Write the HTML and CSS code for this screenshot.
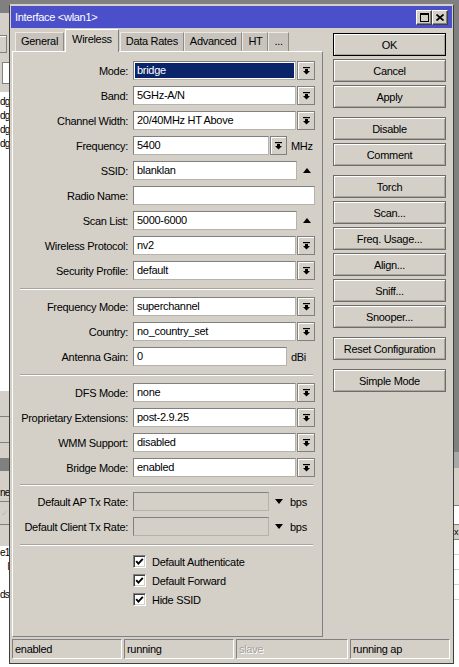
FILE: index.html
```html
<!DOCTYPE html>
<html lang="en">
<head>
    <meta charset="UTF-8">
    <meta name="viewport" content="width=device-width, initial-scale=1.0">
    <title>Interface &lt;wlan1&gt;</title>
    <link rel="stylesheet" href="styles.css">
</head>
<body>
    <svg class="defs" width="0" height="0">
        <symbol id="dd" viewBox="0 0 7 8">
            <rect x="0" y="0" width="7" height="1.2"/>
            <rect x="2" y="2" width="3" height="2"/>
            <polygon points="0,4 7,4 3.5,7.6"/>
        </symbol>
    </svg>

    <!-- windows behind the dialog -->
    <div class="bg-win bg-left">
        <div class="bg-tool"><span class="bg-btn"></span></div>
        <div class="bg-field"></div>
        <div class="bg-list">
            <div class="bg-row">dg</div>
            <div class="bg-row">dg</div>
            <div class="bg-row">dg</div>
            <div class="bg-row">dg</div>
        </div>
        <div class="bg-bar"></div>
        <div class="bg-bar"></div>
    </div>
    <div class="bg-win bg-left2">
        <div class="bg-cap"></div>
        <div class="bg-head">ne</div>
        <div class="bg-tool2">✓</div>
        <div class="bg-list2">
            <div class="bg-row">e1</div>
            <div class="bg-row">l</div>
            <div class="bg-row"></div>
            <div class="bg-row">ds</div>
        </div>
    </div>
    <div class="bg-win bg-right">
        <div class="bg-cap"></div>
        <div class="bg-field2"></div>
        <div class="bg-head2">x</div>
        <div class="bg-lines">
            <div class="bg-line"></div>
            <div class="bg-line"></div>
            <div class="bg-line"></div>
            <div class="bg-line"></div>
        </div>
    </div>
    <div class="bg-win bg-bottom"></div>

    <div class="window">
        <div class="titlebar">
            <span class="title">Interface &lt;wlan1&gt;</span>
            <div class="title-buttons">
                <span class="tbtn">
                    <svg width="9" height="9" viewBox="0 0 9 9"><rect x="0.5" y="0.5" width="8" height="8" fill="none" stroke="#000"/><rect x="0" y="0" width="9" height="2"/></svg>
                </span>
                <span class="tbtn">
                    <svg width="8" height="7" viewBox="0 0 8 7"><path d="M0.5 0.5 L7.5 6.5 M7.5 0.5 L0.5 6.5" stroke="#000" stroke-width="1.7"/></svg>
                </span>
            </div>
        </div>

        <div class="body">
            <div class="main">
                <div class="left">
                    <div class="tabs">
                        <span class="tab">General</span>
                        <span class="tab active">Wireless</span>
                        <span class="tab">Data Rates</span>
                        <span class="tab">Advanced</span>
                        <span class="tab">HT</span>
                        <span class="tab">...</span>
                    </div>
                    <div class="panel">
                        <div class="row">
                            <label>Mode:</label>
                            <div class="combo">
                                <span class="field selected">bridge</span>
                                <span class="drop"><svg><use href="#dd"/></svg></span>
                            </div>
                        </div>
                        <div class="row">
                            <label>Band:</label>
                            <div class="combo">
                                <span class="field">5GHz-A/N</span>
                                <span class="drop"><svg><use href="#dd"/></svg></span>
                            </div>
                        </div>
                        <div class="row">
                            <label>Channel Width:</label>
                            <div class="combo">
                                <span class="field">20/40MHz HT Above</span>
                                <span class="drop"><svg><use href="#dd"/></svg></span>
                            </div>
                        </div>
                        <div class="row">
                            <label>Frequency:</label>
                            <div class="combo short">
                                <span class="field">5400</span>
                                <span class="drop narrow"><svg><use href="#dd"/></svg></span>
                            </div>
                            <span class="unit">MHz</span>
                        </div>
                        <div class="row">
                            <label>SSID:</label>
                            <span class="field list">blanklan</span>
                            <span class="tri up"></span>
                        </div>
                        <div class="row">
                            <label>Radio Name:</label>
                            <span class="field wide"></span>
                        </div>
                        <div class="row">
                            <label>Scan List:</label>
                            <span class="field list">5000-6000</span>
                            <span class="tri up"></span>
                        </div>
                        <div class="row">
                            <label>Wireless Protocol:</label>
                            <div class="combo">
                                <span class="field">nv2</span>
                                <span class="drop"><svg><use href="#dd"/></svg></span>
                            </div>
                        </div>
                        <div class="row">
                            <label>Security Profile:</label>
                            <div class="combo">
                                <span class="field">default</span>
                                <span class="drop"><svg><use href="#dd"/></svg></span>
                            </div>
                        </div>

                        <div class="sep"></div>

                        <div class="row">
                            <label>Frequency Mode:</label>
                            <div class="combo">
                                <span class="field">superchannel</span>
                                <span class="drop"><svg><use href="#dd"/></svg></span>
                            </div>
                        </div>
                        <div class="row">
                            <label>Country:</label>
                            <div class="combo">
                                <span class="field">no_country_set</span>
                                <span class="drop"><svg><use href="#dd"/></svg></span>
                            </div>
                        </div>
                        <div class="row">
                            <label>Antenna Gain:</label>
                            <span class="field mid">0</span>
                            <span class="unit">dBi</span>
                        </div>

                        <div class="sep"></div>

                        <div class="row">
                            <label>DFS Mode:</label>
                            <div class="combo">
                                <span class="field">none</span>
                                <span class="drop"><svg><use href="#dd"/></svg></span>
                            </div>
                        </div>
                        <div class="row">
                            <label>Proprietary Extensions:</label>
                            <div class="combo">
                                <span class="field">post-2.9.25</span>
                                <span class="drop"><svg><use href="#dd"/></svg></span>
                            </div>
                        </div>
                        <div class="row">
                            <label>WMM Support:</label>
                            <div class="combo">
                                <span class="field">disabled</span>
                                <span class="drop"><svg><use href="#dd"/></svg></span>
                            </div>
                        </div>
                        <div class="row">
                            <label>Bridge Mode:</label>
                            <div class="combo">
                                <span class="field">enabled</span>
                                <span class="drop"><svg><use href="#dd"/></svg></span>
                            </div>
                        </div>

                        <div class="sep tight"></div>

                        <div class="row">
                            <label>Default AP Tx Rate:</label>
                            <span class="field short off"></span>
                            <span class="tri down"></span>
                            <span class="unit bps">bps</span>
                        </div>
                        <div class="row">
                            <label>Default Client Tx Rate:</label>
                            <span class="field short off"></span>
                            <span class="tri down"></span>
                            <span class="unit bps">bps</span>
                        </div>

                        <div class="sep loose"></div>

                        <div class="check-row">
                            <span class="checkbox"><svg width="9" height="9" viewBox="0 0 9 9"><polyline points="1.2,4.2 3.4,6.6 7.8,1.8" fill="none" stroke="#000" stroke-width="1.9"/></svg></span>
                            <span>Default Authenticate</span>
                        </div>
                        <div class="check-row">
                            <span class="checkbox"><svg width="9" height="9" viewBox="0 0 9 9"><polyline points="1.2,4.2 3.4,6.6 7.8,1.8" fill="none" stroke="#000" stroke-width="1.9"/></svg></span>
                            <span>Default Forward</span>
                        </div>
                        <div class="check-row">
                            <span class="checkbox"><svg width="9" height="9" viewBox="0 0 9 9"><polyline points="1.2,4.2 3.4,6.6 7.8,1.8" fill="none" stroke="#000" stroke-width="1.9"/></svg></span>
                            <span>Hide SSID</span>
                        </div>
                    </div>
                </div>

                <div class="buttons">
                    <button class="btn default">OK</button>
                    <button class="btn">Cancel</button>
                    <button class="btn">Apply</button>
                    <button class="btn group">Disable</button>
                    <button class="btn">Comment</button>
                    <button class="btn group">Torch</button>
                    <button class="btn">Scan...</button>
                    <button class="btn">Freq. Usage...</button>
                    <button class="btn">Align...</button>
                    <button class="btn">Sniff...</button>
                    <button class="btn">Snooper...</button>
                    <button class="btn group">Reset Configuration</button>
                    <button class="btn group">Simple Mode</button>
                </div>
            </div>

            <div class="status">
                <span class="cell c1">enabled</span>
                <span class="cell c2">running</span>
                <span class="cell c3 dim">slave</span>
                <span class="cell c4">running ap</span>
            </div>
        </div>
    </div>
</body>
</html>
```

FILE: styles.css
```css
* {
    box-sizing: border-box;
}
body {
    margin: 0;
    width: 459px;
    height: 667px;
    overflow: hidden;
    position: relative;
    background: #808080;
    font-family: "Liberation Sans", Arial, sans-serif;
    font-size: 11px;
    letter-spacing: -0.3px;
    color: #000;
}
.defs {
    position: absolute;
}

/* desktop windows behind */
.bg-win {
    position: absolute;
    background: #d4d0c8;
    overflow: hidden;
}
.bg-left {
    left: 0;
    top: 13px;
    width: 9px;
    height: 445px;
}
.bg-tool {
    height: 49px;
    padding-top: 22px;
}
.bg-btn {
    display: block;
    width: 7px;
    height: 18px;
    border: 1px solid #808080;
    border-left: none;
    box-shadow: inset 0 1px 0 #fff;
}
.bg-field {
    height: 22px;
    margin-left: 2px;
    background: #fff;
    border: 1px solid #808080;
    border-right: none;
}
.bg-list {
    margin-top: 8px;
    height: 299px;
    background: #fff;
    padding-top: 3px;
}
.bg-row {
    height: 14px;
    line-height: 14px;
    text-align: right;
    white-space: nowrap;
    font-size: 10px;
    letter-spacing: -0.8px;
}
.bg-bar {
    height: 26px;
    border-bottom: 1px solid #808080;
}
.bg-left2 {
    left: 0;
    top: 458px;
    width: 9px;
    height: 209px;
}
.bg-cap {
    height: 13px;
    background: #808080;
}
.bg-head {
    margin-top: 13px;
    height: 18px;
    line-height: 18px;
    text-align: right;
    font-size: 10px;
    letter-spacing: -0.8px;
    border-bottom: 1px solid #808080;
}
.bg-tool2 {
    height: 23px;
    line-height: 23px;
    font-size: 9px;
    color: #bdbab3;
    text-align: right;
    border-bottom: 1px solid #808080;
}
.bg-list2 {
    margin-top: 21px;
    background: #fff;
    height: 140px;
}
.bg-right {
    left: 453px;
    top: 452px;
    width: 6px;
    height: 215px;
}
.bg-right .bg-cap {
    height: 16px;
    background: #a8a8a8;
}
.bg-field2 {
    margin-top: 37px;
    height: 20px;
    background: #fff;
    border: 1px solid #808080;
    border-right: none;
}
.bg-head2 {
    height: 15px;
    line-height: 15px;
    padding-left: 1px;
    font-size: 9px;
    border-bottom: 1px solid #808080;
}
.bg-lines {
    background: #fff;
    height: 140px;
}
.bg-line {
    height: 15px;
    border-bottom: 1px solid #d0d0d0;
}
.bg-bottom {
    left: 0;
    top: 664px;
    width: 459px;
    height: 3px;
    background: #fff;
}

/* dialog */
.window {
    position: absolute;
    left: 9px;
    top: 4px;
    width: 445px;
    height: 660px;
    padding: 1px;
    background: #d4d0c8;
    border: 1px solid #404040;
    border-top-color: #d4d0c8;
}
.titlebar {
    height: 22px;
    background: #4b4fc9;
    color: #fff;
    display: flex;
    align-items: center;
    justify-content: space-between;
    padding: 0 4px;
}
.title-buttons {
    display: flex;
}
.tbtn {
    width: 16px;
    height: 15px;
    background: #d4d0c8;
    border: 1px solid #404040;
    border-top-color: #fff;
    border-left-color: #fff;
    box-shadow: inset -1px -1px 0 #808080;
    display: flex;
    align-items: center;
    justify-content: center;
}
.body {
    padding: 1px 0 0 1px;
}
.main {
    display: flex;
    height: 608px;
}
.left {
    width: 311px;
    display: flex;
    flex-direction: column;
}
.tabs {
    height: 22px;
    display: flex;
    align-items: flex-end;
    padding-left: 3px;
}
.tab {
    height: 19px;
    line-height: 17px;
    padding: 0 5px;
    background: #c8c4bd;
    border: 1px solid #ece9e3;
    border-bottom: none;
    border-right-color: #8e8b85;
    white-space: nowrap;
}
.tab.active {
    height: 23px;
    margin: 0 1px -1px 1px;
    padding: 0 6px;
    line-height: 18px;
    background: #d4d0c8;
    border-color: #fff;
    border-right-color: #808080;
    position: relative;
    z-index: 1;
}
.panel {
    flex: 1;
    display: flex;
    flex-direction: column;
    border: 1px solid #808080;
    border-top-color: #fff;
    border-left-color: #fff;
    padding-top: 9px;
}
.row {
    display: flex;
    align-items: center;
    flex: none;
    height: 19px;
    margin-bottom: 6px;
}
.row label {
    flex: none;
    width: 115px;
    margin-right: 5px;
    text-align: right;
    white-space: nowrap;
}
.combo {
    display: flex;
    width: 182px;
    height: 19px;
}
.combo.short {
    width: 154px;
}
.field {
    display: block;
    height: 19px;
    line-height: 17px;
    padding-left: 3px;
    background: #fff;
    border: 1px solid #808080;
    border-right-color: #b6b3ac;
    border-bottom-color: #b6b3ac;
    white-space: nowrap;
    overflow: hidden;
}
.combo .field {
    flex: 1;
}
.field.selected {
    background: #0a246a;
    color: #fff;
    box-shadow: inset 0 0 0 1px #fff;
}
.field.list {
    width: 164px;
}
.field.wide {
    width: 182px;
}
.field.mid {
    width: 154px;
}
.field.short {
    width: 136px;
}
.field.off {
    background: #d4d0c8;
}
.drop {
    flex: none;
    width: 18px;
    margin-left: 1px;
    background: #d4d0c8;
    border: 1px solid #808080;
    box-shadow: inset 1px 1px 0 #fff;
    display: flex;
    align-items: center;
    justify-content: center;
}
.drop.narrow {
    width: 17px;
}
.drop svg {
    width: 7px;
    height: 8px;
}
.unit {
    margin-left: 4px;
}
.unit.bps {
    margin-left: 7px;
}
.tri {
    width: 0;
    height: 0;
    margin-left: 6px;
    border-left: 4.5px solid transparent;
    border-right: 4.5px solid transparent;
}
.tri.up {
    border-bottom: 5px solid #000;
}
.tri.down {
    border-top: 5px solid #000;
}
.sep {
    flex: none;
    margin: 2px 9px 7px 7px;
    height: 2px;
    border-top: 1px solid #a7a49d;
    border-bottom: 1px solid #fff;
}
.sep.tight {
    margin: 1px 9px 6px 7px;
}
.sep.loose {
    margin: 2px 9px 6px 7px;
}
.check-row {
    display: flex;
    align-items: center;
    flex: none;
    height: 19px;
    padding-left: 120px;
}
.checkbox {
    width: 13px;
    height: 13px;
    margin-right: 6px;
    background: #fff;
    border: 1px solid #808080;
    border-right-color: #fff;
    border-bottom-color: #fff;
    box-shadow: inset 1px 1px 0 #404040, inset -1px -1px 0 #d4d0c8;
    display: flex;
    align-items: center;
    justify-content: center;
}

/* right side buttons */
.buttons {
    width: 113px;
    margin-left: 10px;
    padding-top: 4px;
    display: flex;
    flex-direction: column;
}
.btn {
    height: 23px;
    margin-bottom: 3px;
    padding: 0;
    font-family: inherit;
    font-size: 11px;
    letter-spacing: -0.3px;
    color: #000;
    background: #d4d0c8;
    border: 1px solid #6e6c68;
    box-shadow: inset 1px 1px 0 #fff, inset -1px -1px 0 #a9a6a0;
}
.btn.default {
    border-color: #000;
}
.btn.group {
    margin-top: 6px;
}

/* status bar */
.status {
    display: flex;
    gap: 2px;
    margin-top: 2px;
    height: 20px;
}
.cell {
    height: 20px;
    line-height: 18px;
    padding-left: 2px;
    border: 1px solid #808080;
    border-right-color: #fff;
    border-bottom-color: #fff;
    white-space: nowrap;
}
.c1 { width: 110px; }
.c2 { width: 110px; }
.c3 { width: 112px; }
.c4 { width: 100px; }
.dim {
    color: #a6a39d;
    text-shadow: 1px 1px 0 #fff;
}
```
